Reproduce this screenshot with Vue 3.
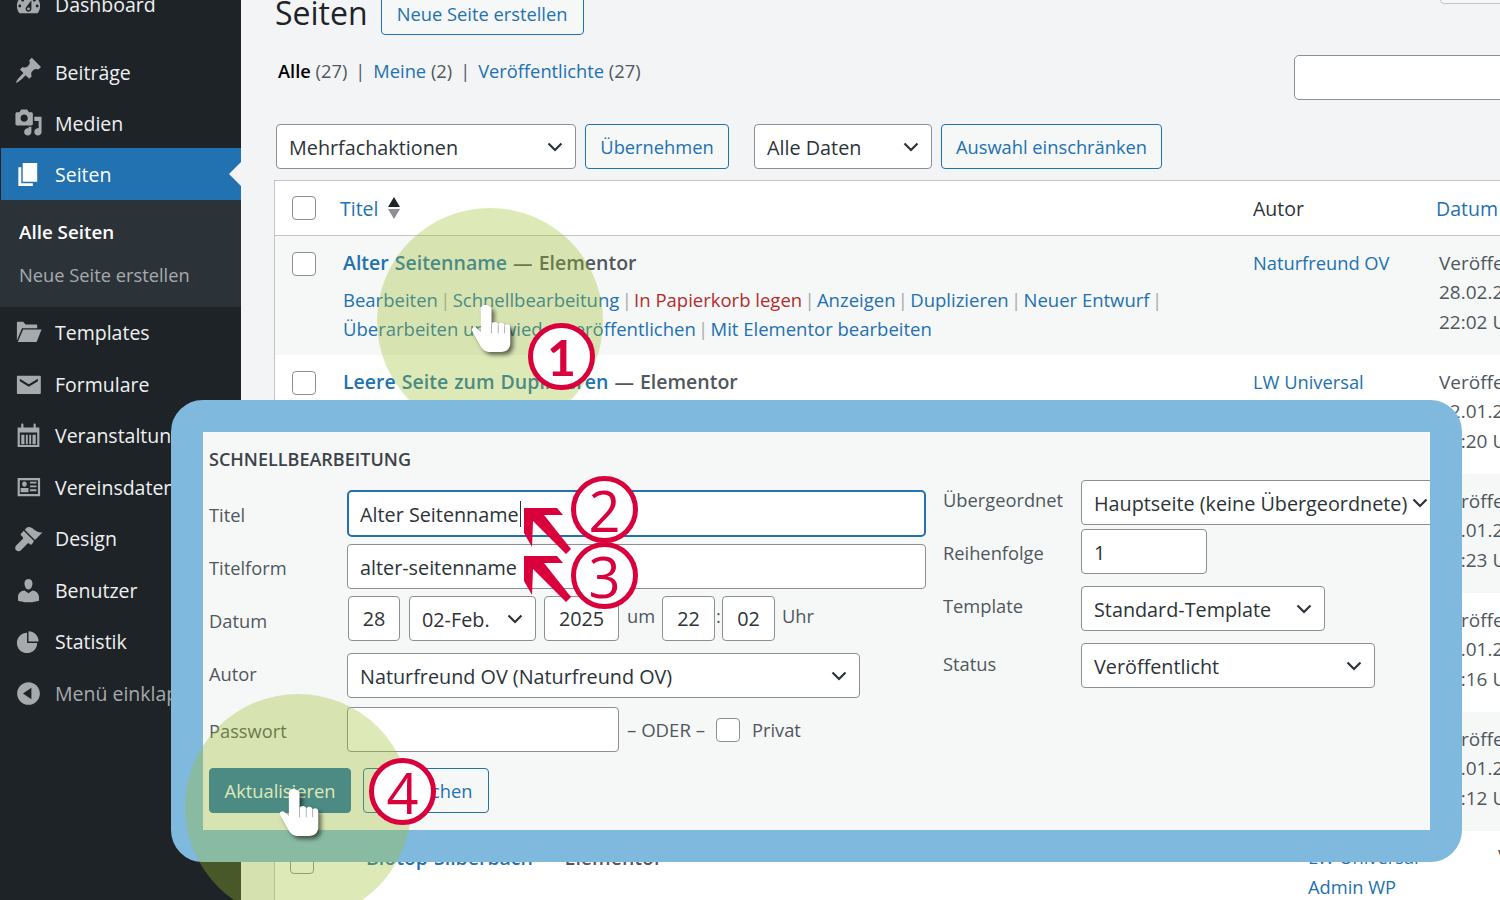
<script setup>
const menu = [
  { label: 'Dashboard', icon: 'dashboard', cls: 'first' },
  { label: 'Beiträge', icon: 'pin', cls: 'nudge' },
  { label: 'Medien', icon: 'media', cls: 'nudge' },
  { label: 'Seiten', icon: 'page', cls: 'active' },
]
const menu2 = [
  { label: 'Templates', icon: 'folder' },
  { label: 'Formulare', icon: 'mail' },
  { label: 'Veranstaltungen', icon: 'cal' },
  { label: 'Vereinsdaten', icon: 'id' },
  { label: 'Design', icon: 'brush' },
  { label: 'Benutzer', icon: 'user' },
  { label: 'Statistik', icon: 'pie' },
  { label: 'Menü einklappen', icon: 'collapse', cls: 'muted' },
]
const icons = {
  dashboard: 'M3.76 16h12.48c1.1-1.37 1.76-3.11 1.76-5 0-4.42-3.58-8-8-8s-8 3.58-8 8c0 1.89.66 3.63 1.76 5zM10 4c.55 0 1 .45 1 1s-.45 1-1 1-1-.45-1-1 .45-1 1-1zM6 6c.55 0 1 .45 1 1s-.45 1-1 1-1-.45-1-1 .45-1 1-1zm8 0c.55 0 1 .45 1 1s-.45 1-1 1-1-.45-1-1 .45-1 1-1zm-5.37 5.55L12 7v6c0 1.1-.9 2-2 2s-2-.9-2-2c0-.57.24-1.08.63-1.45zM4 10c.55 0 1 .45 1 1s-.45 1-1 1-1-.45-1-1 .45-1 1-1zm12 0c.55 0 1 .45 1 1s-.45 1-1 1-1-.45-1-1 .45-1 1-1zm-5 3c0-.55-.45-1-1-1s-1 .45-1 1 .45 1 1 1 1-.45 1-1z',
  pin: 'M10.44 3.02l1.82-1.82 6.36 6.35-1.83 1.82c-1.05-.68-2.48-.57-3.41.36l-.75.75c-.92.93-1.04 2.35-.35 3.41l-1.83 1.82-2.41-2.41-2.8 2.79c-.42.42-3.38 2.71-3.8 2.29s1.86-3.39 2.28-3.81l2.79-2.79L4.1 9.36l1.83-1.82c1.05.69 2.48.57 3.4-.36l.75-.75c.93-.92 1.05-2.35.36-3.41z',
  media: 'M13 11V4c0-.55-.45-1-1-1h-1.67L9 1H5L3.67 3H2c-.55 0-1 .45-1 1v7c0 .55.45 1 1 1h10c.55 0 1-.45 1-1zM7 4.5c1.38 0 2.5 1.12 2.5 2.5S8.38 9.5 7 9.5 4.5 8.38 4.5 7 5.62 4.5 7 4.5zM14 6h5v10.5c0 1.38-1.12 2.5-2.5 2.5S14 17.88 14 16.5s1.12-2.5 2.5-2.5c.17 0 .34.02.5.05V9h-3V6zm-4 8.05V13h2v3.5c0 1.38-1.12 2.5-2.5 2.5S7 17.88 7 16.5 8.12 14 9.5 14c.17 0 .34.02.5.05z',
  page: 'M6 15V2h10v13H6zm-1 1h8v2H3V5h2v11z',
  folder: 'M2 15.500V3.200c0-.4.3-.7.7-.7h3.600l1.700 2h7.300c.4 0 .7.3.7.7V7H5.500L2 15.500zM6.300 8H19l-3.400 8.500H2.600L6.300 8z',
  mail: 'M2.500 4h15.500c.3 0 .5.2.5.5V16c0 .3-.2.5-.5.5H2.500c-.3 0-.5-.2-.5-.5V4.500c0-.3.2-.5.5-.5zM4 6v1.700l6.200 3.900 6.300-3.900V6l-6.300 3.800L4 6z',
  cal: 'M2.500 4.500H5V2.500c0-.5.300-.8.700-.8s.8.3.8.8v2h7V2.500c0-.5.300-.8.700-.8s.8.3.8.8v2h2.500V18h-15V4.500zM4 8v8.500h12V8H4zM5 9.500h2.200V16H5V9.500zm3.200 0h1.300V16H8.200V9.500zm2.300 0h1.300V16h-1.300V9.500zm2.300 0H15V16h-2.200V9.500z',
  id: 'M2.500 3.500h15.500V16H2.500V3.500zM4 5v9.500h12.500V5H4zM7.200 5.800c1 0 1.600.8 1.600 1.800S8.200 9.500 7.200 9.500 5.600 8.600 5.600 7.600 6.200 5.800 7.200 5.800zM4.600 10.300h5.400v3H4.600v-3zM11 6h4.500v1.300H11V6zm0 2.600h4.500v1.300H11V8.600zm0 2.600h4.500v1.300H11v-1.300z',
  brush: 'M14.48 11.06L7.41 3.99l1.5-1.5c.5-.56 2.3-.47 3.51.32 1.21.8 1.43 1.28 2.91 2.1 1.18.64 2.45 1.26 4.45.85zM13.77 11.77L6.7 4.7 4.93 6.47c-.39.39-.39 1.02 0 1.41l1.06 1.06c.39.39.39 1.03 0 1.42L1.500 14.800c-.9.9-.9 2.400 0 3.300s2.400.9 3.300 0l4.400-4.460c.39-.39 1.030-.39 1.420 0l.35.35c.39.39 1.020.39 1.410 0z',
  user: 'M10 9.25c-2.27 0-2.730-3.440-2.730-3.440C7 4.020 7.820 2 9.970 2c2.160 0 2.980 2.020 2.710 3.810 0 0-.41 3.440-2.680 3.440zm0 2.570L12.720 10c2.390 0 4.520 2.330 4.520 4.530v2.490s-3.650 1.130-7.240 1.130c-3.650 0-7.240-1.130-7.240-1.130v-2.490c0-2.250 1.940-4.480 4.470-4.480z',
  pie: 'M10 10V3c3.870 0 7 3.130 7 7h-7zM9 4v7h7c0 3.870-3.130 7-7 7s-7-3.130-7-7 3.130-7 7-7z',
  collapse: 'M10 2.160c4.330 0 7.840 3.510 7.840 7.840s-3.510 7.840-7.840 7.840S2.160 14.330 2.160 10 5.710 2.160 10 2.160zm2 11.720V6.120L6.180 9.970z',
}
const dateRows = [
  ['22.01.2025', '14:20 Uhr'],
  ['22.01.2025', '14:23 Uhr'],
  ['22.01.2025', '14:16 Uhr'],
  ['22.01.2025', '14:12 Uhr'],
]
const hand = 'M13.500 1c-2.300 0-3.700 1.500-3.700 3.500V27L5.500 23c-2-2-5.500.2-4 3L9 39.500c2.200 4 5 6.500 9.500 6.500H29c6 0 9-3.500 9-8.500V22.500c0-3.500-4.500-3.800-5.500-1.500 0-3.500-5-3.800-6-1 0-3.500-5.500-3.800-6.500-.5V4.500C20 2.500 15.800 1 13.500 1z'
const arrow = '0,0 33,0 39,7 20,7 47,41 42,46 9,13 8,39 0,25'
</script>

<template>
  <div class="page">
    <aside class="side">
      <div v-for="m in menu" :key="m.label" class="item" :class="m.cls">
        <svg class="ico" viewBox="0 0 20 20"><path :d="icons[m.icon]" /></svg>
        <span>{{ m.label }}</span>
      </div>
      <div class="sub">
        <div class="sub-on">Alle Seiten</div>
        <div class="sub-off">Neue Seite erstellen</div>
      </div>
      <div v-for="m in menu2" :key="m.label" class="item" :class="m.cls">
        <svg class="ico" viewBox="0 0 20 20"><path :d="icons[m.icon]" /></svg>
        <span>{{ m.label }}</span>
      </div>
    </aside>

    <main class="main">
      <div class="head">
        <h1>Seiten</h1>
        <div class="btn">Neue Seite erstellen</div>
        <div class="screen-tab"></div>
      </div>
      <div class="views">
        <div class="views-text">
          <b>Alle</b> <span class="gray">(27)</span><span class="bar">|</span><a>Meine</a> <span class="gray">(2)</span><span class="bar">|</span><a>Veröffentlichte</a> <span class="gray">(27)</span>
        </div>
        <div class="search"></div>
      </div>
      <div class="bulk">
        <div class="sel w300"><span>Mehrfachaktionen</span><svg viewBox="0 0 16 10"><path d="M1.500 1.500 8 8l6.500-6.500" /></svg></div>
        <div class="btn w144">Übernehmen</div>
        <div class="sel w178"><span>Alle Daten</span><svg viewBox="0 0 16 10"><path d="M1.500 1.500 8 8l6.500-6.500" /></svg></div>
        <div class="btn w221">Auswahl einschränken</div>
      </div>

      <section class="table">
        <div class="thead">
          <i class="check"></i>
          <a class="t-title">Titel</a>
          <span class="sort"><em class="up"></em><em class="down"></em></span>
          <span class="t-autor">Autor</span>
          <a class="t-datum">Datum</a>
        </div>

        <div class="row alt">
          <i class="check"></i>
          <div class="cell-title">
            <div class="title"><a>Alter Seitenname</a> — Elementor</div>
            <div class="actions">
              <a>Bearbeiten</a><s>|</s><a>Schnellbearbeitung</a><s>|</s><a class="red">In Papierkorb legen</a><s>|</s><a>Anzeigen</a><s>|</s><a>Duplizieren</a><s>|</s><a>Neuer Entwurf</a><s>|</s><br />
              <a>Überarbeiten und wieder veröffentlichen</a><s>|</s><a>Mit Elementor bearbeiten</a>
            </div>
          </div>
          <a class="cell-author">Naturfreund OV</a>
          <div class="cell-date">Veröffentlicht<br />28.02.2025<br />22:02 Uhr</div>
        </div>

        <div class="row">
          <i class="check"></i>
          <div class="cell-title">
            <div class="title"><a>Leere Seite zum Duplizieren</a> — Elementor</div>
          </div>
          <a class="cell-author">LW Universal</a>
          <div class="cell-date">Veröffentlicht<br />{{ dateRows[0][0] }}<br />{{ dateRows[0][1] }}</div>
        </div>

        <div v-for="(d, i) in dateRows.slice(1)" :key="i" class="row" :class="{ alt: i % 2 === 0 }">
          <i class="check hide"></i>
          <div class="cell-title"></div>
          <span class="cell-author"></span>
          <div class="cell-date">Veröffentlicht<br />{{ d[0] }}<br />{{ d[1] }}</div>
        </div>

        <div class="row last">
          <i class="check"></i>
          <div class="cell-title">
            <div class="title"><a>Biotop Silberbach</a> — Elementor</div>
          </div>
          <div class="cell-author">LW Universal<br />Admin WP</div>
          <div class="cell-date">Veröffentlicht</div>
        </div>
      </section>
    </main>

    <div class="blob blob1"></div>

    <div class="panel">
      <div class="inner">
        <div class="col-l">
          <div class="qh">SCHNELLBEARBEITUNG</div>
          <div class="f f-title">
            <label>Titel</label>
            <div class="inp focus w579">Alter Seitenname<i class="caret"></i></div>
          </div>
          <div class="f f-slug">
            <label>Titelform</label>
            <div class="inp w579">alter-seitenname</div>
          </div>
          <div class="f f-date">
            <label>Datum</label>
            <div class="inp d-day">28</div>
            <div class="sel d-mon"><span>02-Feb.</span><svg viewBox="0 0 16 10"><path d="M1.500 1.500 8 8l6.500-6.500" /></svg></div>
            <div class="inp d-year">2025</div>
            <span class="lt um">um</span>
            <div class="inp d-hm">22</div>
            <span class="lt colon">:</span>
            <div class="inp d-hm">02</div>
            <span class="lt uhr">Uhr</span>
          </div>
          <div class="f f-author">
            <label>Autor</label>
            <div class="sel d-author"><span>Naturfreund OV (Naturfreund OV)</span><svg viewBox="0 0 16 10"><path d="M1.500 1.500 8 8l6.500-6.500" /></svg></div>
          </div>
          <div class="f f-pass">
            <label>Passwort</label>
            <div class="inp d-pass"></div>
            <span class="lt oder">– ODER –</span>
            <i class="check"></i>
            <span class="lt privat">Privat</span>
          </div>
          <div class="f-btns">
            <div class="btn primary">Aktualisieren</div>
            <div class="btn cancel">Abbrechen</div>
          </div>
        </div>
        <div class="col-r">
          <div class="f r1">
            <label>Übergeordnet</label>
            <div class="sel d-parent"><span>Hauptseite (keine Übergeordnete)</span><svg viewBox="0 0 16 10"><path d="M1.500 1.500 8 8l6.500-6.500" /></svg></div>
          </div>
          <div class="f r2">
            <label>Reihenfolge</label>
            <div class="inp d-order">1</div>
          </div>
          <div class="f r3">
            <label>Template</label>
            <div class="sel d-tpl"><span>Standard-Template</span><svg viewBox="0 0 16 10"><path d="M1.500 1.500 8 8l6.500-6.500" /></svg></div>
          </div>
          <div class="f r4">
            <label>Status</label>
            <div class="sel d-status"><span>Veröffentlicht</span><svg viewBox="0 0 16 10"><path d="M1.500 1.500 8 8l6.500-6.500" /></svg></div>
          </div>
        </div>
      </div>
    </div>

    <div class="blob blob4"></div>

    <svg class="arrow a2" viewBox="0 0 48 47"><polygon :points="arrow" /></svg>
    <svg class="arrow a3" viewBox="0 0 48 47"><polygon :points="arrow" /></svg>

    <div class="num n1">1</div>
    <div class="num n2">2</div>
    <div class="num n3">3</div>
    <div class="num n4">4</div>

    <svg class="hand h1" viewBox="0 0 40 48"><path :d="hand" /><path class="gap" d="M20 19v9M26.500 20v8M32.500 21v7" /></svg>
    <svg class="hand h4" viewBox="0 0 40 48"><path :d="hand" /><path class="gap" d="M20 19v9M26.500 20v8M32.500 21v7" /></svg>
  </div>
</template>

<style>
html, body { margin: 0; padding: 0; background: #f0f0f1; }
</style>

<style scoped>
.page {
  position: relative;
  display: flex;
  width: 1500px;
  height: 900px;
  overflow: hidden;
  background: #f3f4f5;
  font-family: "Open Sans", "Noto Sans", sans-serif;
  font-size: 18.300px;
  color: #2c3338;
}
a { color: #2271b1; }

/* sidebar */
.side {
  flex: 0 0 241px;
  height: 900px;
  background: #1d2327;
  color: #f0f0f1;
  font-size: 19.500px;
}
.item {
  display: flex;
  align-items: center;
  height: 51.500px;
  white-space: nowrap;
  overflow: hidden;
  position: relative;
}
.item span { margin-left: 12px; }
.item.nudge span { padding-top: 3px; }
.item.first { margin-top: -21px; margin-bottom: 14.500px; }
.item.active {
  height: 52px;
  margin-left: 1px;
  background: #2271b1;
  color: #fff;
}
.item.active .ico { fill: #fff; margin-left: 13px; }
.item.active::after {
  content: "";
  position: absolute;
  right: 0;
  top: 14px;
  border: 12px solid transparent;
  border-right-color: #f3f4f5;
  border-left-width: 0;
}
.item.muted { color: #a7aaad; }
.ico {
  flex: 0 0 29px;
  width: 29px;
  height: 29px;
  margin-left: 14px;
  fill: #a7aaad;
}
.sub {
  height: 107px;
  background: #2c3338;
  padding: 15px 0 0 19px;
  box-sizing: border-box;
  font-size: 18.300px;
}
.sub-on { font-weight: 600; font-size: 18.800px; line-height: 34px; color: #fff; }
.sub-off { line-height: 34px; margin-top: 9px; color: #a7aaad; }

/* main */
.main { flex: 1 1 auto; min-width: 0; padding-left: 33px; }
.head {
  display: flex;
  align-items: center;
  height: 44px;
  margin-top: -9px;
}
h1 {
  margin: 0 13px 0 1px;
  font-size: 32px;
  font-weight: 400;
  line-height: 40px;
  color: #1d2327;
}
.btn {
  display: flex;
  align-items: center;
  justify-content: center;
  box-sizing: border-box;
  height: 45px;
  padding: 0 15px;
  border: 1px solid #2271b1;
  border-radius: 4px;
  background: #f6f7f7;
  color: #2271b1;
  white-space: nowrap;
}
.head .btn { height: 44px; width: 203px; }
.screen-tab {
  align-self: flex-start;
  box-sizing: border-box;
  flex: none;
  width: 80px;
  height: 13px;
  margin-left: auto;
  margin-right: -20px;
  border: 1px solid #c3c4c7;
  border-radius: 4px;
  background: #f6f7f7;
}
.views {
  display: flex;
  align-items: flex-start;
  margin-top: 20px;
  height: 45px;
}
.views-text { padding: 0 0 0 4px; line-height: 32px; white-space: nowrap; }
.views-text b { color: #000; font-weight: 600; }
.gray { color: #50575e; }
.bar { margin: 0 8px; color: #50575e; }
.search {
  box-sizing: border-box;
  width: 240px;
  height: 45px;
  margin-left: auto;
  margin-right: -34px;
  border: 1px solid #8c8f94;
  border-radius: 5px;
  background: #fff;
}
.bulk {
  display: flex;
  gap: 9px;
  margin: 24px 0 11px 2px;
}
.sel, .inp {
  display: flex;
  align-items: center;
  box-sizing: border-box;
  height: 45px;
  padding: 1px 12px 0;
  border: 1px solid #8c8f94;
  border-radius: 4px;
  background: #fff;
  color: #2c3338;
  font-size: 19.800px;
  white-space: nowrap;
}
.sel { justify-content: space-between; flex: none; }
.sel svg { flex: none; width: 16px; height: 10px; fill: none; stroke: #2c3338; stroke-width: 2.200; }
.w300 { width: 300px; }
.w178 { width: 178px; margin-left: 16px; }
.w144 { width: 144px; }
.w221 { width: 221px; }

/* table */
.table {
  width: 1260px;
  border-top: 1px solid #c3c4c7;
  border-left: 1px solid #c3c4c7;
  background: #fff;
}
.thead {
  display: flex;
  align-items: center;
  height: 55px;
  border-bottom: 1px solid #c3c4c7;
  position: relative;
  font-size: 19.500px;
  box-sizing: border-box;
}
.check {
  flex: none;
  display: block;
  box-sizing: border-box;
  width: 24px;
  height: 24px;
  border: 1px solid #8c8f94;
  border-radius: 4px;
  background: #fff;
}
.thead > .check { margin-left: 17px; }
.t-title { margin-left: 24px; }
.sort { display: flex; flex-direction: column; gap: 2px; margin-left: 9px; }
.sort em { display: block; border: 6px solid transparent; border-top-width: 0; border-bottom-width: 0; }
.up { border-bottom: 10px solid #1d2327 !important; }
.down { border-top: 10px solid #8c8f94 !important; }
.t-autor { position: absolute; left: 978px; }
.t-datum { position: absolute; left: 1161px; }

.row {
  position: relative;
  display: flex;
  align-items: flex-start;
  box-sizing: border-box;
  height: 119px;
  padding-left: 17px;
  background: #fff;
}
.row.alt { background: #f6f7f7; }
.row > .check { margin-top: 16px; }
.row > .check.hide { visibility: hidden; }
.cell-title { flex: none; width: 910px; margin-left: 27px; padding-top: 10px; }
.title { font-size: 19.500px; font-weight: 600; line-height: 34px; color: #50575e; white-space: nowrap; word-spacing: 1px; }
.actions { line-height: 29px; margin-top: 5px; white-space: nowrap; font-size: 18.500px; }
.actions s { text-decoration: none; color: #a7aaad; margin: 0 2.300px; }
.red { color: #b32d2e; }
.cell-author { flex: none; width: 186px; padding-top: 10px; line-height: 34px; color: #2271b1; white-space: nowrap; }
.cell-date { padding-top: 12.500px; line-height: 29.500px; color: #50575e; white-space: nowrap; font-size: 19px; }
.row.last > .check { margin-top: 19px; margin-left: -2px; }
.row.last .cell-title { margin-left: 52px; width: 942px; padding-top: 10px; }
.row.last .cell-author { width: 190px; padding-top: 11px; line-height: 30px; }
.row.last .cell-date { padding-top: 11px; }

/* overlay */
.blob {
  position: absolute;
  width: 226px;
  height: 226px;
  border-radius: 50%;
  background: rgba(155, 190, 45, 0.34);
}
.blob1 { left: 377px; top: 208px; }
.blob4 { left: 185px; top: 694px; }
.panel {
  position: absolute;
  left: 171px;
  top: 400px;
  width: 1291px;
  height: 462px;
  box-sizing: border-box;
  border: 32px solid #7fb9de;
  border-radius: 32px;
  background: #7fb9de;
}
.inner {
  display: flex;
  height: 100%;
  overflow: hidden;
  background: #f6f7f7;
  color: #50575e;
}
.col-l { flex: 0 0 740px; box-sizing: border-box; padding-left: 6px; }
.col-r { flex: 1 1 auto; min-width: 0; }
.qh { margin-top: 16px; line-height: 22px; font-size: 18px; font-weight: 600; color: #3c434a; }
.f { display: flex; align-items: center; }
.f label { flex: 0 0 138px; }
.w579 { width: 579px; }
.f-title { margin-top: 20px; height: 47px; }
.f-title label { margin-top: 2px; }
.f-title .inp { height: 47px; border: 2px solid #2271b1; border-radius: 5px; padding-left: 11px; }
.caret { display: inline-block; width: 1px; height: 26px; background: #2c3338; margin-left: 1px; }
.f-slug { margin-top: 7px; height: 45px; }
.f-slug label { margin-top: 2px; }
.f-date { margin-top: 7px; height: 45px; }
.f-date label { flex-basis: 139px; margin-top: 4px; }
.f-author { margin-top: 12px; height: 45px; }
.f-author label { margin-top: -4px; }
.f-pass { margin-top: 9px; height: 45px; }
.f-pass label { margin-top: 2px; }
.d-day { width: 52px; justify-content: center; padding: 0; }
.d-mon { width: 127px; margin-left: 9px; }
.d-year { width: 75px; margin-left: 8px; justify-content: center; padding: 0; }
.lt { flex: none; }
.um { width: 27px; margin: -7px 8px 0 8px; }
.d-hm { width: 53px; justify-content: center; padding: 0; }
.colon { width: 7px; text-align: center; margin-top: -7px; }
.uhr { margin: -7px 0 0 7px; }
.d-author { width: 513px; }
.d-pass { width: 272px; }
.oder { width: 81px; margin: 0 8px; font-size: 18.600px; }
.privat { margin-left: 12px; }
.f-pass .check { margin: 0; }
.f-btns { display: flex; gap: 12px; margin-top: 16px; }
.primary { width: 142px; background: #2271b1; color: #fff; }
.cancel { width: 126px; }
.r1 { margin-top: 48px; height: 45px; }
.r2 { margin-top: 4px; height: 45px; }
.r3 { margin-top: 12px; height: 45px; }
.r4 { margin-top: 12px; height: 45px; }
.r1 label { margin-top: -7px; }
.r2 label { margin-top: 2px; }
.r3 label { margin-top: -6px; }
.r4 label { margin-top: -4px; }
.d-parent { width: 360px; }
.d-order { width: 126px; }
.d-tpl { width: 244px; }
.d-status { width: 294px; }

.arrow { position: absolute; width: 48px; height: 47px; fill: #d9003c; }
.a2 { left: 524px; top: 508px; }
.a3 { left: 524px; top: 556px; }
.num {
  position: absolute;
  box-sizing: border-box;
  display: flex;
  align-items: center;
  justify-content: center;
  width: 67px;
  height: 67px;
  border: 5px solid #d9003c;
  border-radius: 50%;
  background: #fff;
  color: #d9003c;
  font-size: 56px;
  line-height: 1;
  font-weight: 500;
}
.n1 { left: 528px; top: 323px; font-family: Lato, "Open Sans", sans-serif; font-weight: 700; font-size: 50px; }
.n2 { left: 571px; top: 476px; }
.n3 { left: 571px; top: 542px; }
.n4 { left: 369px; top: 758px; }
.hand {
  position: absolute;
  width: 43px;
  height: 50px;
  fill: #fff;
  filter: drop-shadow(3px 3px 2px rgba(0, 0, 0, 0.55));
}
.hand .gap { fill: none; stroke: #b5b5b5; stroke-width: 1; }
.h1 { left: 470px; top: 304px; }
.h4 { left: 278px; top: 788px; }
</style>
